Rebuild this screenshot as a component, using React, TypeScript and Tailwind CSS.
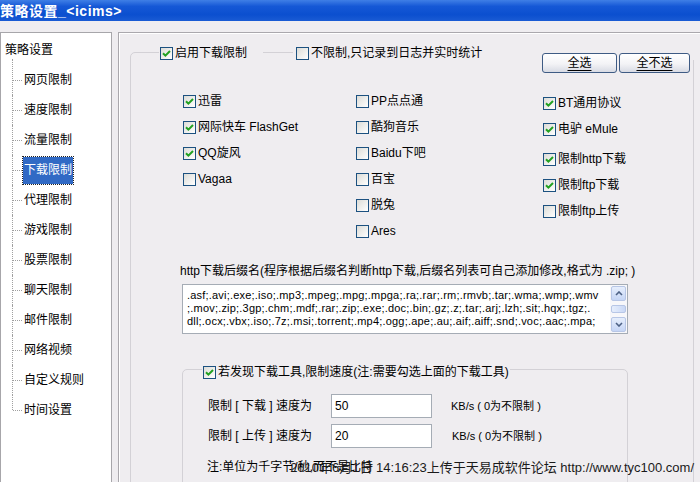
import React from "react";

const FONT = "font-['Liberation_Sans','Noto_Sans_CJK_SC',sans-serif]";

const treeItems = [
  "网页限制",
  "速度限制",
  "流量限制",
  "下载限制",
  "代理限制",
  "游戏限制",
  "股票限制",
  "聊天限制",
  "邮件限制",
  "网络视频",
  "自定义规则",
  "时间设置",
];

const col1: [string, boolean][] = [
  ["迅雷", true],
  ["网际快车 FlashGet", true],
  ["QQ旋风", true],
  ["Vagaa", false],
];
const col2: [string, boolean][] = [
  ["PP点点通", false],
  ["酷狗音乐", false],
  ["Baidu下吧", false],
  ["百宝", false],
  ["脱兔", false],
  ["Ares", false],
];
const col3: [string, boolean][] = [
  ["BT通用协议", true],
  ["电驴 eMule", true],
  ["限制http下载", true],
  ["限制ftp下载", true],
  ["限制ftp上传", false],
];

const Check = ({ on }: { on: boolean }) => (
  <span className="flex h-[13px] w-[13px] shrink-0 items-center justify-center border border-[#1c5180] bg-[linear-gradient(135deg,#dcdcd7,#ffffff)]">
    {on && (
      <svg width="9" height="9" viewBox="0 0 9 9">
        <path d="M1 4.2 L3.4 6.6 L8 2" fill="none" stroke="#21a121" strokeWidth="2" />
      </svg>
    )}
  </span>
);

const CheckItem = ({ label, on }: { label: string; on: boolean }) => (
  <div className="flex h-[26px] items-center gap-[2px]">
    <Check on={on} />
    <span>{label}</span>
  </div>
);

const XpButton = ({ children, w }: { children: React.ReactNode; w: string }) => (
  <div
    className={`flex h-[20px] items-center justify-center rounded-[3px] border border-[#3e5b84] bg-[linear-gradient(to_bottom,#ffffff,#f3f3f6_55%,#d8dbe4)] ${w}`}
  >
    <span className="underline underline-offset-[3px]">{children}</span>
  </div>
);

const ScrollBtn = ({ up }: { up: boolean }) => (
  <div className="flex h-[15px] w-[15px] items-center justify-center rounded-[2px] border border-[#b7c6e6] bg-[linear-gradient(to_bottom,#e6eefc,#c5d5f5)]">
    <svg width="8" height="5" viewBox="0 0 8 5">
      <path
        d={up ? "M1 4 L4 1 L7 4" : "M1 1 L4 4 L7 1"}
        fill="none"
        stroke="#4d6185"
        strokeWidth="1.6"
      />
    </svg>
  </div>
);

export default function App() {
  return (
    <div className={`relative h-[482px] w-[700px] overflow-hidden bg-[#efedf0] text-[12px] leading-[14px] text-black ${FONT}`}>
      {/* title bar */}
      <div className="flex h-[21px] items-center bg-[linear-gradient(to_bottom,#3f7fe6,#1558d6_30%,#0b4fcf_70%,#1a5bd4)] text-[14px] font-bold text-white">
        <span className="tracking-[0.5px]">策略设置_&lt;icims&gt;</span>
      </div>

      <div className="flex h-[461px] pt-[11px]">
        {/* tree */}
        <div className="h-full w-[112px] shrink-0 border border-b-0 border-[#a7a6aa] bg-white pt-[2px]">
          <div className="flex h-[30px] items-center pl-[4px]">策略设置</div>
          {treeItems.map((t, i) => (
            <div key={t} className="relative flex h-[30px] items-center pl-[22px]">
              <span
                className={`absolute left-[11px] border-l border-dotted border-[#a0a0a0] ${
                  i === 0 ? "top-[-6px] h-[36px]" : i === treeItems.length - 1 ? "top-0 h-[15px]" : "top-0 h-[30px]"
                }`}
              />
              <span className="absolute left-[12px] top-[15px] w-[9px] border-t border-dotted border-[#a0a0a0]" />
              {t === "下载限制" ? (
                <span className="flex h-[27px] items-center bg-[#316ac5] px-[1px] text-white outline-1 outline-dotted outline-[#222]">
                  {t}
                </span>
              ) : (
                <span className="px-[1px]">{t}</span>
              )}
            </div>
          ))}
        </div>

        {/* main panel */}
        <div className="ml-[6px] h-full flex-1 overflow-hidden border-l border-t border-[#aaa8ad] shadow-[inset_1px_1px_0_#ffffff]">
          <div className="relative ml-[11px] mt-[19px] h-[470px] w-[564px] rounded-[5px] border border-[#d3d1d6]">
            {/* legend */}
            <div className="absolute left-[28px] right-[-2px] top-[-7px] flex h-[14px] items-center">
              <div className="flex h-[14px] w-[104px] items-center gap-[2px] bg-[#efedf0] pl-[1px]">
                <Check on={true} />
                <span>启用下载限制</span>
              </div>
              <div className="ml-[30px] flex h-[14px] flex-1 items-center gap-[2px] bg-[#efedf0] pl-[3px]">
                <Check on={false} />
                <span>不限制,只记录到日志并实时统计</span>
              </div>
            </div>

            {/* buttons */}
            <div className="relative z-10 flex justify-end gap-[2px] pr-[3px]">
              <XpButton w="w-[75px]">全选</XpButton>
              <XpButton w="w-[71px]">全不选</XpButton>
            </div>

            {/* checkbox grid */}
            <div className="mt-[15px] flex pl-[52px]">
              <div className="flex w-[173px] flex-col">
                {col1.map(([l, on]) => (
                  <CheckItem key={l} label={l} on={on} />
                ))}
              </div>
              <div className="flex w-[187px] flex-col">
                {col2.map(([l, on]) => (
                  <CheckItem key={l} label={l} on={on} />
                ))}
              </div>
              <div className="flex flex-1 flex-col pt-[2px]">
                <CheckItem label={col3[0][0]} on={col3[0][1]} />
                <div className="mb-[4px]">
                  <CheckItem label={col3[1][0]} on={col3[1][1]} />
                </div>
                {col3.slice(2).map(([l, on]) => (
                  <CheckItem key={l} label={l} on={on} />
                ))}
              </div>
            </div>

            {/* suffix list */}
            <div className="mt-[20px] pl-[49px]">
              http下载后缀名(程序根据后缀名判断http下载,后缀名列表可自己添加修改,格式为 .zip; )
            </div>
            <div className="ml-[51px] mt-[6px] flex h-[50px] w-[446px] border border-[#a5acb5] bg-white">
              <div className="flex-1 overflow-hidden whitespace-nowrap pl-[4px] pt-[4px] text-[11px] leading-[13px] tracking-[0.2px]">
                <div>.asf;.avi;.exe;.iso;.mp3;.mpeg;.mpg;.mpga;.ra;.rar;.rm;.rmvb;.tar;.wma;.wmp;.wmv</div>
                <div>;.mov;.zip;.3gp;.chm;.mdf;.rar;.zip;.exe;.doc;.bin;.gz;.z;.tar;.arj;.lzh;.sit;.hqx;.tgz;.</div>
                <div>dll;.ocx;.vbx;.iso;.7z;.msi;.torrent;.mp4;.ogg;.ape;.au;.aif;.aiff;.snd;.voc;.aac;.mpa;</div>
              </div>
              <div className="flex w-[17px] flex-col items-center justify-between bg-[#f7f7fa] py-[1px]">
                <ScrollBtn up={true} />
                <div className="h-[8px] w-[15px] rounded-[2px] border border-[#b7c6e6] bg-[linear-gradient(to_right,#e6eefc,#c9d8f6)]" />
                <ScrollBtn up={false} />
              </div>
            </div>

            {/* speed group */}
            <div className="relative ml-[51px] mt-[35px] h-[130px] w-[446px] rounded-[5px] border border-[#d3d1d6]">
              <div className="absolute left-[19px] top-[-5px] flex h-[14px] items-center gap-[2px] bg-[#efedf0] px-[1px]">
                <Check on={true} />
                <span>若发现下载工具,限制速度(注:需要勾选上面的下载工具)</span>
              </div>
              <div className="mt-[24px] flex h-[24px] items-center pl-[25px]">
                <span className="w-[123px]">限制 [ 下载 ] 速度为</span>
                <div className="h-[24px] w-[101px] border border-[#a5acb5] bg-white pl-[3px] pt-[4px]">50</div>
                <span className="ml-[19px] text-[11px]">KB/s ( 0为不限制 )</span>
              </div>
              <div className="mt-[6px] flex h-[24px] items-center pl-[25px]">
                <span className="w-[123px]">限制 [ 上传 ] 速度为</span>
                <div className="h-[24px] w-[101px] border border-[#a5acb5] bg-white pl-[3px] pt-[4px]">20</div>
                <span className="ml-[20px] text-[11px]">KB/s ( 0为不限制 )</span>
              </div>
              <div className="mt-[12px] pl-[24px]">注:单位为千字节/秒,而不是比特</div>
            </div>
          </div>
        </div>
      </div>

      {/* upload watermark */}
      <div className="absolute right-[6px] top-[460px] whitespace-nowrap text-[13px] leading-[16px] text-[#1a1a1a]">
        2010年6月1日 14:16:23上传于天易成软件论坛 http://www.tyc100.com/
      </div>
    </div>
  );
}
